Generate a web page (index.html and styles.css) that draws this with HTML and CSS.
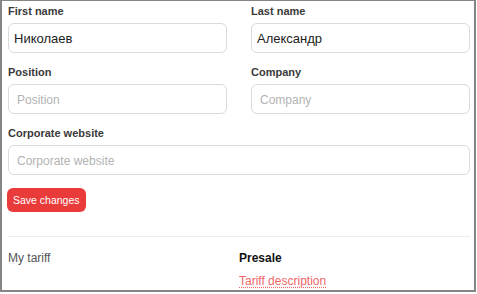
FILE: index.html
```html
<!DOCTYPE html>
<html>
<head>
  <meta charset="utf-8">
  <title>Profile</title>
  <link rel="stylesheet" href="styles.css">
</head>
<body>
  <div class="frame">
    <form class="profile-form">
      <div class="fields">
        <div class="field">
          <label class="field-label">First name</label>
          <input class="field-input" type="text" value="Николаев" placeholder="First name">
        </div>
        <div class="field">
          <label class="field-label">Last name</label>
          <input class="field-input" type="text" value="Александр" placeholder="Last name">
        </div>
        <div class="field">
          <label class="field-label">Position</label>
          <input class="field-input empty" type="text" placeholder="Position">
        </div>
        <div class="field">
          <label class="field-label">Company</label>
          <input class="field-input empty" type="text" placeholder="Company">
        </div>
        <div class="field wide">
          <label class="field-label">Corporate website</label>
          <input class="field-input empty" type="text" placeholder="Corporate website">
        </div>
      </div>
      <button class="btn-save" type="button">Save changes</button>
    </form>

    <div class="tariff">
      <div class="tariff-name">My tariff</div>
      <div class="tariff-info">
        <div class="tariff-title">Presale</div>
        <a class="tariff-link">Tariff description</a>
      </div>
    </div>
  </div>
</body>
</html>
```

FILE: styles.css
```css
html, body {
  margin: 0;
  background: #fff;
  font-family: "Liberation Sans", Arial, sans-serif;
}

.frame {
  box-sizing: border-box;
  width: 476px;
  height: 292px;
  border: 2px solid #858585;
  border-top-width: 1px;
  padding: 3px 4px 0 6px;
  overflow: hidden;
}

.fields {
  display: grid;
  grid-template-columns: 1fr 1fr;
  column-gap: 24px;
  row-gap: 12px;
}

.field {
  display: flex;
  flex-direction: column;
  gap: 5px;
}

.field.wide {
  grid-column: 1 / 3;
}

.field-label {
  font-size: 11px;
  line-height: 14px;
  font-weight: bold;
  color: #3a3a3a;
}

.field-input {
  box-sizing: border-box;
  height: 30px;
  margin: 0;
  padding: 0 5px;
  border: 1px solid #dadada;
  border-radius: 6px;
  font-family: inherit;
  font-size: 13px;
  color: #222;
  outline: none;
}

.field-input.empty {
  padding-left: 8px;
}

.field-input::placeholder {
  font-size: 12px;
  color: #b3b3b3;
}

.btn-save {
  display: block;
  margin-top: 13px;
  margin-left: -1px;
  height: 24px;
  padding: 0 6px;
  border: none;
  border-radius: 6px;
  background: #ea3b3b;
  color: #fff;
  font-family: inherit;
  font-size: 10.5px;
}

.tariff {
  display: grid;
  grid-template-columns: 1fr 1fr;
  margin-top: 24px;
  padding-top: 13px;
  border-top: 1px solid #ececec;
  font-size: 12px;
  line-height: 16px;
}

.tariff-name {
  color: #555;
}

.tariff-title {
  font-weight: bold;
  color: #111;
}

.tariff-link {
  display: inline-block;
  margin-top: 7px;
  color: #f06666;
  text-decoration: underline dotted;
  text-underline-offset: 2px;
}
```
